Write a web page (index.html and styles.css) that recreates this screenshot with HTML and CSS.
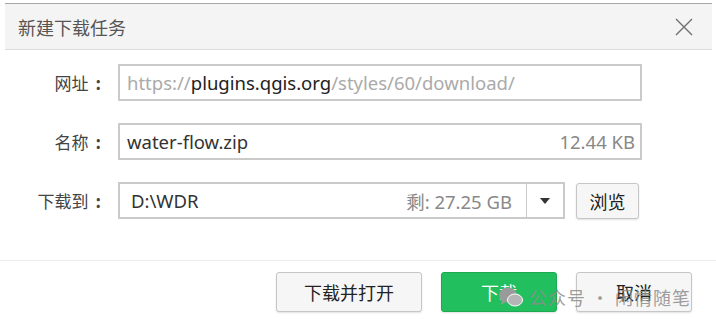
FILE: index.html
```html
<!doctype html>
<html>
<head>
  <title>新建下载任务</title>
  <link rel="stylesheet" href="styles.css">
</head>
<body>
  <div class="dialog">
    <div class="title-bar">
      <span class="title">新建下载任务</span>
      <span class="close">
        <svg width="20" height="20" viewBox="0 0 20 20"><path d="M2 2 L18 18 M18 2 L2 18" stroke="#707070" stroke-width="1.4" fill="none"/></svg>
      </span>
    </div>

    <div class="form">
      <div class="row">
        <label class="label">网址<span class="colon">:</span></label>
        <div class="field">
          <span class="url"><span class="dim">https://</span>plugins.qgis.org<span class="dim">/styles/60/download/</span></span>
        </div>
      </div>
      <div class="row">
        <label class="label">名称<span class="colon">:</span></label>
        <div class="field">
          <span class="value">water-flow.zip</span>
          <span class="side">12.44 KB</span>
        </div>
      </div>
      <div class="row">
        <label class="label">下载到<span class="colon">:</span></label>
        <div class="field path">
          <span class="value">D:\WDR</span>
          <span class="side">剩: 27.25 GB</span>
          <span class="drop"><svg width="12" height="8" viewBox="0 0 12 8"><path d="M1 1 L11 1 L6 7 Z" fill="#333"/></svg></span>
        </div>
        <button class="btn browse">浏览</button>
      </div>
    </div>

    <div class="footer">
      <button class="btn big">下载并打开</button>
      <button class="btn big green">下载</button>
      <button class="btn big">取消</button>
    </div>

    <div class="watermark">
      <svg width="26" height="22" viewBox="0 0 26 22">
        <ellipse cx="10" cy="9" rx="9" ry="7.5" fill="#9a9a9a"/>
        <path d="M4 14 L3 19 L8 15.5 Z" fill="#9a9a9a"/>
        <ellipse cx="17" cy="14" rx="7.5" ry="6" fill="#b5b5b5" stroke="#fff" stroke-width="1"/>
      </svg>
      <span>公众号 · 闲情随笔</span>
    </div>
  </div>
</body>
</html>
```

FILE: styles.css
```css
body {
  margin: 0;
  background-color: #fff;
  font-family: "Noto Sans", "Noto Sans CJK SC", sans-serif;
}

.dialog {
  position: relative;
  width: 716px;
  height: 326px;
  overflow: hidden;
}

.title-bar {
  margin: 3px 4px 0 5px;
  height: 45px;
  border-top: 1px solid #a8a8a8;
  border-bottom: 1px solid #dcdcdc;
  background-color: #f4f4f4;
  display: flex;
  align-items: center;
  justify-content: space-between;
  padding: 0 18px 0 13px;
}

.title {
  font-size: 18px;
  color: #555;
  font-family: "Noto Sans CJK SC", sans-serif;
}

.close {
  display: flex;
}

.form {
  padding-top: 14px;
}

.row {
  display: flex;
  align-items: center;
  height: 37px;
  margin-bottom: 22px;
}

.row:last-child {
  margin-bottom: 0;
}

.label {
  width: 101px;
  text-align: right;
  padding-right: 17px;
  font-size: 17px;
  color: #444;
  font-family: "Noto Sans CJK SC", sans-serif;
}

.colon {
  margin-left: 7px;
  font-weight: bold;
}

.field {
  width: 524px;
  height: 37px;
  box-sizing: border-box;
  border: 2px solid #cacaca;
  display: flex;
  align-items: center;
  justify-content: space-between;
  padding: 0 5px 0 7px;
  font-size: 18.5px;
}

.url {
  color: #222;
}

.dim {
  color: #aaa;
}

.value {
  color: #333;
}

.side {
  color: #888;
}

.path {
  width: 447px;
  padding: 0 0 0 11px;
}

.path .side {
  margin-left: auto;
  margin-right: 14px;
}

.path .drop {
  width: 36px;
  height: 100%;
  border-left: 1px solid #cacaca;
  display: flex;
  align-items: center;
  justify-content: center;
}

.btn {
  font-family: "Noto Sans CJK SC", sans-serif;
  font-size: 18px;
  color: #222;
  background-color: #f6f6f6;
  border: 1px solid #c6c6c6;
  border-radius: 3px;
  box-shadow: 0 1px 2px rgba(0, 0, 0, 0.12);
}

.browse {
  margin-left: 11px;
  width: 63px;
  height: 36px;
  padding: 0;
}

.footer {
  margin-top: 41px;
  border-top: 1px solid #ececec;
  display: flex;
  justify-content: flex-end;
  gap: 19px;
  padding: 11px 24px 0 0;
}

.big {
  width: 146px;
  height: 40px;
}

.green {
  width: 116px;
  background-color: #22bf5e;
  border-color: #1ea852;
  color: #fff;
}

.footer .big:last-child {
  width: 116px;
}

.watermark {
  position: absolute;
  left: 498px;
  top: 284px;
  display: flex;
  align-items: center;
  gap: 5px;
  color: rgba(140, 140, 140, 0.85);
  font-size: 18px;
  font-family: "Noto Sans CJK SC", sans-serif;
  letter-spacing: 1px;
}
```
